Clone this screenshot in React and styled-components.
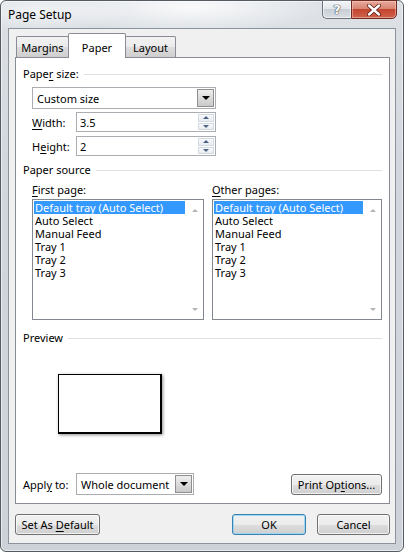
import React from 'react';
import styled, { createGlobalStyle } from 'styled-components';

const GlobalStyle = createGlobalStyle`
  html, body {
    margin: 0;
    padding: 0;
    background: #ffffff;
  }

  body {
    font-family: "Noto Sans", "Liberation Sans", sans-serif;
    font-size: 11px;
    color: #000;
  }
`;

const TRAYS = ['Default tray (Auto Select)', 'Auto Select', 'Manual Feed', 'Tray 1', 'Tray 2', 'Tray 3'];

const TrayList = () => (
  <ListBox>
    <ListItems>
      {TRAYS.map((item, i) => (
        <ListItem key={item} $selected={i === 0}>{item}</ListItem>
      ))}
    </ListItems>
    <ScrollTrack>
      <ScrollArrow $up />
      <ScrollArrow />
    </ScrollTrack>
  </ListBox>
);

const Spinner = ({ value }) => (
  <SpinBox>
    <SpinText>{value}</SpinText>
    <SpinButtons>
      <SpinButton><SmallArrow $up /></SpinButton>
      <SpinButton><SmallArrow /></SpinButton>
    </SpinButtons>
  </SpinBox>
);

const App = () => {
  return (
    <>
      <GlobalStyle />
      <Window>
        <TitleBar>
          <Title>Page Setup</Title>
          <CaptionButtons>
            <HelpButton>?</HelpButton>
            <CloseButton>
              <svg width="16" height="12" viewBox="0 0 16 12">
                <path d="M3 1.5 L13 10.5 M13 1.5 L3 10.5" stroke="#5a1a10" strokeWidth="4" strokeLinecap="round" />
                <path d="M3 1.5 L13 10.5 M13 1.5 L3 10.5" stroke="#ffffff" strokeWidth="2.4" strokeLinecap="round" />
              </svg>
            </CloseButton>
          </CaptionButtons>
        </TitleBar>

        <Client>
          <TabRow>
            <Tab $width={53}>Margins</Tab>
            <Tab $width={58} $active>Paper</Tab>
            <Tab $width={51}>Layout</Tab>
          </TabRow>

          <Panel>
            <SectionHeader>
              <span>Pape<Key>r</Key> size:</span>
            </SectionHeader>
            <Group>
              <ComboBox $width={184}>
                <ComboText>Custom size</ComboText>
                <DropButton><DownArrow /></DropButton>
              </ComboBox>
              <FieldRow>
                <FieldLabel $width={44}><Key>W</Key>idth:</FieldLabel>
                <Spinner value="3.5" />
              </FieldRow>
              <FieldRow $gap={4}>
                <FieldLabel $width={44}>H<Key>e</Key>ight:</FieldLabel>
                <Spinner value="2" />
              </FieldRow>
            </Group>

            <SectionHeader $top={7}>
              <span>Paper source</span>
            </SectionHeader>
            <SourceGrid>
              <SourceColumn>
                <span><Key>F</Key>irst page:</span>
                <TrayList />
              </SourceColumn>
              <SourceColumn>
                <span><Key>O</Key>ther pages:</span>
                <TrayList />
              </SourceColumn>
            </SourceGrid>

            <SectionHeader $top={11}>
              <span>Preview</span>
            </SectionHeader>
            <PreviewPage />

            <ApplyRow>
              <FieldLabel $width={53}>Appl<Key>y</Key> to:</FieldLabel>
              <ComboBox $width={118}>
                <ComboText>Whole document</ComboText>
                <DropButton><DownArrow /></DropButton>
              </ComboBox>
              <Button $width={91} $push>Print Op<Key>t</Key>ions...</Button>
            </ApplyRow>
          </Panel>

          <Footer>
            <Button $width={85}>Set As <Key>D</Key>efault</Button>
            <Button $width={74} $push $default>OK</Button>
            <Button $width={73}>Cancel</Button>
          </Footer>
        </Client>
      </Window>
    </>
  );
};

const Window = styled.div`
  box-sizing: border-box;
  width: 404px;
  height: 552px;
  display: flex;
  flex-direction: column;
  padding: 0 7px 7px 7px;
  border: 1px solid #555b63;
  border-radius: 6px;
  background:
    radial-gradient(ellipse 140px 26px at 190px 6px, rgba(255, 255, 255, 0.85), rgba(255, 255, 255, 0)),
    radial-gradient(ellipse 90px 20px at 40px 10px, rgba(255, 255, 255, 0.6), rgba(255, 255, 255, 0)),
    linear-gradient(180deg, #dde1e6 0%, #d2d7dd 30%, #cdd2d8 100%);
  box-shadow: inset 0 0 0 1px rgba(255, 255, 255, 0.55);
`;

const TitleBar = styled.div`
  height: 27px;
  flex-shrink: 0;
  display: flex;
  align-items: flex-start;
  justify-content: space-between;
`;

const Title = styled.div`
  margin-top: 6px;
  font-size: 12px;
  line-height: 15px;
`;

const CaptionButtons = styled.div`
  display: flex;
  margin-top: -1px;
  margin-right: -1px;
`;

const HelpButton = styled.div`
  box-sizing: border-box;
  width: 29px;
  height: 19px;
  display: flex;
  align-items: center;
  justify-content: center;
  border: 1px solid #6c737c;
  border-right: none;
  border-radius: 0 0 0 5px;
  background: linear-gradient(180deg, #f3f5f7 0%, #e3e7eb 45%, #c9cfd6 50%, #d9dee3 100%);
  box-shadow: inset 0 0 0 1px rgba(255, 255, 255, 0.6);
  font-family: "DejaVu Sans", sans-serif;
  font-size: 13px;
  font-weight: bold;
  color: #ffffff;
  text-shadow: 0 0 1px #3e4650, 0 0 1px #3e4650, 0 0 1px #3e4650;
`;

const CloseButton = styled.div`
  box-sizing: border-box;
  width: 46px;
  height: 19px;
  display: flex;
  align-items: center;
  justify-content: center;
  border: 1px solid #6e2a20;
  border-radius: 0 0 5px 0;
  background: linear-gradient(180deg, #e7a99c 0%, #d98573 45%, #c4452f 50%, #d0634b 100%);
  box-shadow: inset 0 0 0 1px rgba(255, 220, 210, 0.45);
`;

const Client = styled.div`
  flex: 1;
  min-height: 0;
  display: flex;
  flex-direction: column;
  padding: 4px 5px 8px 6px;
  border: 1px solid #8c939b;
  background: #f0f0f0;
`;

const TabRow = styled.div`
  height: 24px;
  flex-shrink: 0;
  display: flex;
  align-items: flex-end;
  padding-left: 1px;
  position: relative;
  z-index: 1;
`;

const Tab = styled.div`
  box-sizing: border-box;
  width: ${(p) => p.$width}px;
  height: ${(p) => (p.$active ? 25 : 21)}px;
  margin-bottom: ${(p) => (p.$active ? -1 : 0)}px;
  padding-top: ${(p) => (p.$active ? 3 : 1)}px;
  display: flex;
  align-items: center;
  justify-content: center;
  border: 1px solid #898c95;
  border-bottom: none;
  border-radius: 2px 2px 0 0;
  background: ${(p) =>
    p.$active ? '#ffffff' : 'linear-gradient(180deg, #f2f2f2 0%, #ebebeb 50%, #dddddd 51%, #cfcfcf 100%)'};

  & + & {
    margin-left: -1px;
  }
`;

const Panel = styled.div`
  flex: 1;
  min-height: 0;
  display: flex;
  flex-direction: column;
  padding: 9px 7px 8px 7px;
  border: 1px solid #898c95;
  background: #ffffff;
`;

const SectionHeader = styled.div`
  height: 14px;
  margin-top: ${(p) => p.$top || 0}px;
  display: flex;
  align-items: center;
  gap: 5px;
  line-height: 14px;

  &::after {
    content: '';
    flex: 1;
    height: 1px;
    background: #dcdfe3;
  }
`;

const Key = styled.u`
  text-decoration: underline;
  text-underline-offset: 2px;
`;

const Group = styled.div`
  margin: 6px 0 0 9px;
  display: flex;
  flex-direction: column;
`;

const ComboBox = styled.div`
  box-sizing: border-box;
  width: ${(p) => p.$width}px;
  height: 22px;
  display: flex;
  align-items: center;
  padding: 1px;
  border: 1px solid #abadb3;
  background: #ffffff;
`;

const ComboText = styled.span`
  flex: 1;
  padding-left: 3px;
  white-space: nowrap;
`;

const DropButton = styled.div`
  box-sizing: border-box;
  width: 17px;
  height: 18px;
  display: flex;
  align-items: center;
  justify-content: center;
  border: 1px solid #8e8f8f;
  background: linear-gradient(180deg, #eeeeee 0%, #dcdcdc 50%, #c9c9c9 100%);
`;

const DownArrow = styled.span`
  width: 0;
  height: 0;
  border-left: 4px solid transparent;
  border-right: 4px solid transparent;
  border-top: 4px solid #000000;
`;

const FieldRow = styled.div`
  margin-top: ${(p) => p.$gap || 3}px;
  display: flex;
  align-items: center;
`;

const FieldLabel = styled.span`
  width: ${(p) => p.$width}px;
  flex-shrink: 0;
`;

const SpinBox = styled.div`
  box-sizing: border-box;
  width: 140px;
  height: 20px;
  display: flex;
  align-items: center;
  padding: 1px;
  border: 1px solid #abadb3;
  background: #ffffff;
`;

const SpinText = styled.span`
  flex: 1;
  padding-left: 2px;
`;

const SpinButtons = styled.div`
  width: 16px;
  height: 16px;
  display: flex;
  flex-direction: column;
  gap: 1px;
`;

const SpinButton = styled.div`
  box-sizing: border-box;
  flex: 1;
  display: flex;
  align-items: center;
  justify-content: center;
  border: 1px solid #d4dae2;
  background: linear-gradient(180deg, #f8f9fb 0%, #e8ecf1 100%);
`;

const SmallArrow = styled.span`
  width: 0;
  height: 0;
  border-left: 3px solid transparent;
  border-right: 3px solid transparent;
  ${(p) => (p.$up ? 'border-bottom: 3px solid #4b6288;' : 'border-top: 3px solid #4b6288;')}
`;

const SourceGrid = styled.div`
  margin: 5px 0 0 9px;
  display: grid;
  grid-template-columns: 172px 1fr;
  column-gap: 8px;
`;

const SourceColumn = styled.div`
  display: flex;
  flex-direction: column;
  gap: 2px;
  line-height: 15px;
`;

const ListBox = styled.div`
  box-sizing: border-box;
  height: 121px;
  display: flex;
  border: 1px solid #828790;
  background: #ffffff;
`;

const ListItems = styled.div`
  flex: 1;
  padding: 1px 1px 0 1px;
  overflow: hidden;
`;

const ListItem = styled.div`
  height: 13px;
  line-height: 13px;
  padding-left: 1px;
  white-space: nowrap;
  background: ${(p) => (p.$selected ? '#3399ff' : 'transparent')};
  color: ${(p) => (p.$selected ? '#ffffff' : '#000000')};
`;

const ScrollTrack = styled.div`
  width: 17px;
  display: flex;
  flex-direction: column;
  align-items: center;
  justify-content: space-between;
  padding: 9px 0 8px;
`;

const ScrollArrow = styled.span`
  width: 0;
  height: 0;
  border-left: 3px solid transparent;
  border-right: 3px solid transparent;
  ${(p) => (p.$up ? 'border-bottom: 3px solid #b4b4b4;' : 'border-top: 3px solid #b4b4b4;')}
`;

const PreviewPage = styled.div`
  box-sizing: border-box;
  width: 104px;
  height: 60px;
  margin: 29px 0 0 35px;
  border: 1px solid #000000;
  border-right-width: 2px;
  border-bottom-width: 2px;
  background: #ffffff;
  box-shadow: 1px 1px 3px rgba(0, 0, 0, 0.45);
`;

const ApplyRow = styled.div`
  margin-top: auto;
  display: flex;
  align-items: center;
`;

const Button = styled.button`
  box-sizing: border-box;
  width: ${(p) => p.$width}px;
  height: 21px;
  margin-left: ${(p) => (p.$push ? 'auto' : '0')};
  padding: 0;
  border: 1px solid ${(p) => (p.$default ? '#3c7fb1' : '#707070')};
  border-radius: 3px;
  background: linear-gradient(180deg, #f2f2f2 0%, #ebebeb 50%, #dddddd 51%, #cfcfcf 100%);
  box-shadow: inset 0 0 0 1px ${(p) => (p.$default ? 'rgba(150, 215, 245, 0.9)' : 'rgba(255, 255, 255, 0.7)')};
  font: inherit;
  color: #000000;
`;

const Footer = styled.div`
  height: 21px;
  flex-shrink: 0;
  margin-top: 10px;
  display: flex;
  gap: 11px;
`;

export default App;
